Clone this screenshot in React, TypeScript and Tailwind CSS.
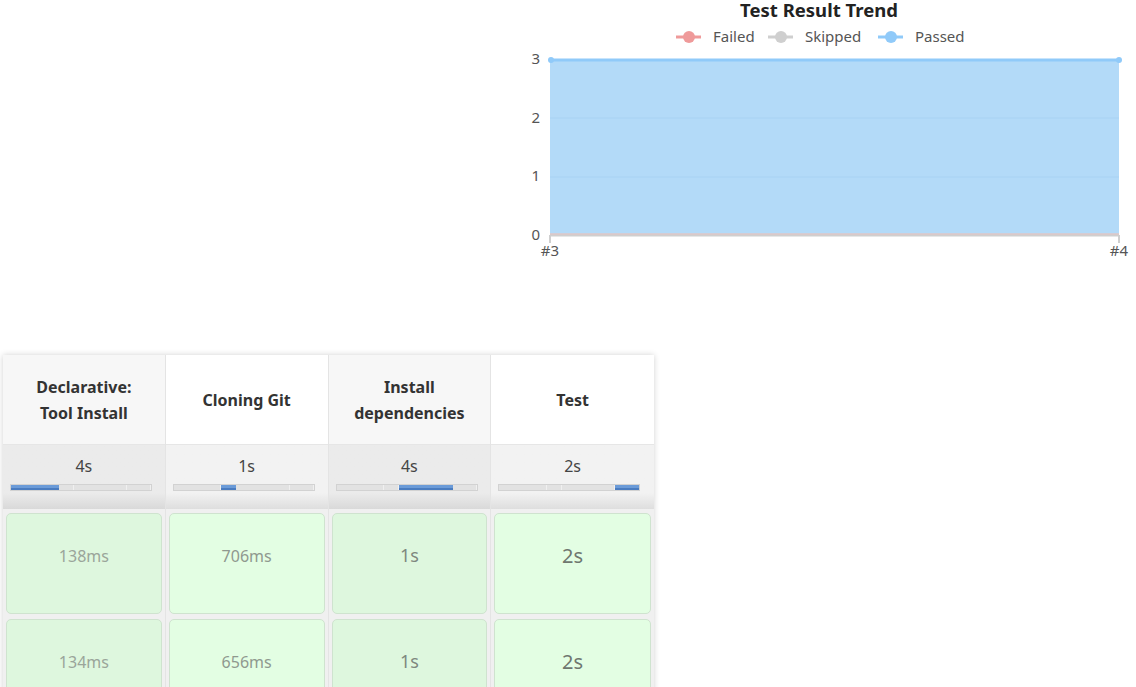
import React from "react";

const SEGMENTS = [48, 15, 54, 24];

interface Stage {
    name: string[];
    avg: string;
    shade: boolean;
    runs: { text: string; size: string; color: string }[];
}

const stages: Stage[] = [
    {
        name: ["Declarative:", "Tool Install"],
        avg: "4s",
        shade: true,
        runs: [
            { text: "138ms", size: "text-[16px]", color: "text-[#9aa59a]" },
            { text: "134ms", size: "text-[16px]", color: "text-[#9aa59a]" },
        ],
    },
    {
        name: ["Cloning Git"],
        avg: "1s",
        shade: false,
        runs: [
            { text: "706ms", size: "text-[16px]", color: "text-[#8f998f]" },
            { text: "656ms", size: "text-[16px]", color: "text-[#8f998f]" },
        ],
    },
    {
        name: ["Install", "dependencies"],
        avg: "4s",
        shade: true,
        runs: [
            { text: "1s", size: "text-[18px]", color: "text-[#7e887e]" },
            { text: "1s", size: "text-[18px]", color: "text-[#7e887e]" },
        ],
    },
    {
        name: ["Test"],
        avg: "2s",
        shade: false,
        runs: [
            { text: "2s", size: "text-[20px]", color: "text-[#6f776f]" },
            { text: "2s", size: "text-[20px]", color: "text-[#6f776f]" },
        ],
    },
];

function Progress({ active }: { active: number }) {
    return (
        <div className="flex h-[7px] w-[142px] ml-[7px] border border-[#d2d2d2] bg-[#e2e2e2]">
            {SEGMENTS.map((w, i) => (
                <div
                    key={i}
                    style={{ width: w }}
                    className={
                        i === active
                            ? "h-full bg-[#6b9bd8] border-b-2 border-[#4a7cc0]"
                            : "h-full border-r border-[#f0f0f0]"
                    }
                />
            ))}
        </div>
    );
}

function Chart() {
    const legend = [
        { x: 676, label: "Failed", color: "#ef9a9a" },
        { x: 768, label: "Skipped", color: "#cfcfcf" },
        { x: 878, label: "Passed", color: "#90caf9" },
    ];
    return (
        <svg width="606" height="262" viewBox="530 0 606 262" className="block">
            <text x="819" y="17" textAnchor="middle" fontSize="18.5" fontWeight="700" fill="#222">Test Result Trend</text>
            {legend.map((l) => (
                <g key={l.label}>
                    <line x1={l.x} y1="37" x2={l.x + 25} y2="37" stroke={l.color} strokeWidth="3" />
                    <circle cx={l.x + 13} cy="37" r="6" fill={l.color} />
                    <text x={l.x + 37} y="42" fontSize="15" fill="#555">{l.label}</text>
                </g>
            ))}
            <rect x="550" y="60" width="569" height="175" fill="#b3daf8" />
            <line x1="550" y1="118" x2="1119" y2="118" stroke="#a8d2f3" strokeWidth="1" />
            <line x1="550" y1="177" x2="1119" y2="177" stroke="#a8d2f3" strokeWidth="1" />
            <line x1="550" y1="60" x2="1119" y2="60" stroke="#90caf9" strokeWidth="3" />
            <circle cx="551" cy="60" r="3" fill="#90caf9" />
            <circle cx="1119" cy="60" r="3" fill="#90caf9" />
            <line x1="550" y1="235" x2="1119" y2="235" stroke="#cfcfcf" strokeWidth="3" />
            <line x1="550" y1="234" x2="1119" y2="234" stroke="#e6c3c3" strokeWidth="1" />
            <line x1="550" y1="235" x2="550" y2="243" stroke="#cfcfcf" strokeWidth="2" />
            <line x1="1119" y1="235" x2="1119" y2="243" stroke="#cfcfcf" strokeWidth="2" />
            {["3", "2", "1", "0"].map((t, i) => (
                <text key={t} x="540" y={64 + i * 58.5} textAnchor="end" fontSize="15" fill="#555">{t}</text>
            ))}
            <text x="550" y="256" textAnchor="middle" fontSize="15" fill="#555">#3</text>
            <text x="1119" y="256" textAnchor="middle" fontSize="15" fill="#555">#4</text>
        </svg>
    );
}

export default function App() {
    return (
        <div className="w-[1136px] h-[687px] overflow-hidden bg-white font-['Noto_Sans',sans-serif]">
            <div className="flex justify-end">
                <Chart />
            </div>
            <div className="ml-[3px] mt-[93px] w-[651px] flex bg-[#f0f0f0] shadow-[0_0_6px_rgba(0,0,0,0.18)]">
                {stages.map((s, i) => (
                    <div key={i} className="w-[162.75px] flex flex-col border-r border-[#e4e4e4] last:border-r-0">
                        <div className={`h-[90px] flex flex-col items-center justify-center border-b border-[#e6e6e6] text-[16px] font-bold leading-[26px] text-[#333] ${s.shade ? "bg-[#f7f7f7]" : "bg-white"}`}>
                            {s.name.map((n) => (
                                <span key={n}>{n}</span>
                            ))}
                        </div>
                        <div className={`h-[64px] pt-[10px] bg-linear-to-b ${s.shade ? "from-[#ebebeb] via-[#ebebeb] to-[#d9d9d9]" : "from-[#f2f2f2] via-[#f2f2f2] to-[#dedede]"} via-75%`}>
                            <div className="text-center text-[16px] leading-[22px] text-[#444]">{s.avg}</div>
                            <div className="mt-[7px]">
                                <Progress active={i} />
                            </div>
                        </div>
                        <div className="flex flex-col gap-[5px] pt-[4px] px-[3px]">
                            {s.runs.map((r, j) => (
                                <div
                                    key={j}
                                    className={`h-[101px] rounded-[5px] border border-[#cfe3cf] flex items-center justify-center pb-[16px] ${s.shade ? "bg-[#def7de]" : "bg-[#e3fee3]"} ${r.size} ${r.color}`}
                                >
                                    {r.text}
                                </div>
                            ))}
                        </div>
                    </div>
                ))}
            </div>
        </div>
    );
}
